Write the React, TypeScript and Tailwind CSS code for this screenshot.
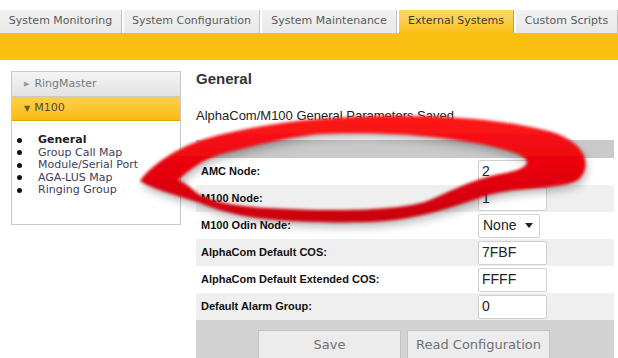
const tabs = [
  { label: 'System Monitoring', width: 'w-[122px]' },
  { label: 'System Configuration', width: 'w-[136px]' },
  { label: 'System Maintenance', width: 'w-[135px]' },
  { label: 'External Systems', width: 'w-[115px]', active: true },
  { label: 'Custom Scripts', width: 'w-[102px]' },
]

const menuItems = ['General', 'Group Call Map', 'Module/Serial Port', 'AGA-LUS Map', 'Ringing Group']

type Row = { label: string; value: string; select?: boolean }

const rows: Row[] = [
  { label: 'AMC Node:', value: '2' },
  { label: 'M100 Node:', value: '1' },
  { label: 'M100 Odin Node:', value: 'None', select: true },
  { label: 'AlphaCom Default COS:', value: '7FBF' },
  { label: 'AlphaCom Default Extended COS:', value: 'FFFF' },
  { label: 'Default Alarm Group:', value: '0' },
]

const verdana = "font-['DejaVu_Sans',Verdana,sans-serif]"
const arial = "font-['Liberation_Sans',Arial,sans-serif]"

function Tabs() {
  return (
    <div className="flex gap-[2px] pt-[10px]">
      {tabs.map((tab) => (
        <div
          key={tab.label}
          className={`${tab.width} flex h-[23px] shrink-0 items-center justify-center border-r text-[11px] ${verdana} ${
            tab.active
              ? 'border-[#d9a400] bg-gradient-to-b from-[#fdd863] to-[#fcc012] text-[#3a3a3a]'
              : 'border-[#c2c2c2] bg-gradient-to-b from-[#f2f2f2] to-[#e8e8e8] text-[#5a5a5a]'
          }`}
        >
          {tab.label}
        </div>
      ))}
    </div>
  )
}

function Sidebar() {
  return (
    <aside className="ml-[11px] mt-[11px] h-[154px] w-[170px] shrink-0 border border-[#c8c8c8] bg-white">
      <div className={`flex h-[25px] items-center gap-[5px] border-b border-[#c8c8c8] bg-gradient-to-b from-[#f4f4f4] to-[#e3e3e3] pl-[12px] text-[11px] text-[#7a7a7a] ${verdana}`}>
        <span className="text-[7px] text-[#999]">▶</span>
        RingMaster
      </div>
      <div className={`flex h-[24px] items-center gap-[4px] border-b border-[#e0a800] bg-gradient-to-b from-[#fdd048] to-[#fbbb05] pl-[12px] text-[11px] text-[#4a4a4a] ${verdana}`}>
        <span className="text-[8px] text-[#6a5a20]">▼</span>
        M100
      </div>
      <ul className={`mt-[13px] text-[11px] leading-[12.5px] text-[#3d3d5c] ${verdana}`}>
        {menuItems.map((item, i) => (
          <li key={item} className="flex items-center">
            <span className="ml-[5px] mr-[16px] h-[5px] w-[5px] rounded-full bg-[#111]" />
            <span className={i === 0 ? 'font-bold text-[#222]' : ''}>{item}</span>
          </li>
        ))}
      </ul>
    </aside>
  )
}

function Field({ row }: { row: Row }) {
  if (row.select) {
    return (
      <div className={`flex h-[24px] w-[62px] items-center justify-between rounded-[2px] border border-[#cfcfcf] bg-white pl-[4px] pr-[6px] text-[14px] text-[#222] ${arial}`}>
        {row.value}
        <span className="h-0 w-0 border-x-[4px] border-t-[5px] border-x-transparent border-t-[#222]" />
      </div>
    )
  }
  return (
    <div className={`flex h-[24px] w-[69px] items-center rounded-[2px] border border-[#cfcfcf] bg-white px-[3px] text-[14px] text-[#222] ${arial}`}>
      {row.value}
    </div>
  )
}

function ParamsTable() {
  return (
    <div className="mt-[16px] w-[418px]">
      <div className="h-[18px] bg-[#c9c9c9]" />
      {rows.map((row, i) => (
        <div
          key={row.label}
          className={`flex h-[27px] items-center ${i % 2 === 0 ? 'bg-white' : 'bg-[#efefef]'}`}
        >
          <span className={`w-[282px] pl-[5px] text-[11px] font-bold text-[#111] ${arial}`}>{row.label}</span>
          <Field row={row} />
        </div>
      ))}
      <div className="flex h-[40px] gap-[6px] bg-[#d3d3d3] pl-[62px] pt-[10px]">
        {['Save', 'Read Configuration'].map((b) => (
          <button
            key={b}
            type="button"
            className={`h-[30px] w-[143px] border border-[#c4c4c4] bg-[#ececec] text-[13px] text-[#707070] ${verdana}`}
          >
            {b}
          </button>
        ))}
      </div>
    </div>
  )
}

// hand-drawn red marker ring around the first two rows
const ring =
  'M320 119 C400 112 490 116 548 131 C585 141 594 165 578 180 C560 190 520 186 485 196 C455 206 420 220 370 222 C330 223 310 222 290 221 C250 219 220 212 200 203 C175 195 150 188 140 181 C150 166 178 147 205 139 C240 129 280 122 320 119 Z ' +
  'M320 134 C410 130 490 142 520 155 C535 163 525 170 500 174 C470 180 450 192 425 202 C390 212 320 211 265 208 C235 206 212 202 198 194 C190 187 184 182 178 180 C190 170 200 160 225 153 C260 144 290 137 320 134 Z'

function RedCircle() {
  return (
    <svg className="pointer-events-none absolute inset-0" width="618" height="358" viewBox="0 0 618 358">
      <defs>
        <filter id="soft" x="-10%" y="-30%" width="120%" height="160%">
          <feGaussianBlur stdDeviation="1.6" />
        </filter>
        <filter id="shade" x="-10%" y="-30%" width="120%" height="160%">
          <feGaussianBlur stdDeviation="4" />
        </filter>
        <linearGradient id="ink" x1="0" y1="0" x2="0" y2="1">
          <stop offset="0" stopColor="#ff1a1a" />
          <stop offset="0.5" stopColor="#e8000c" />
          <stop offset="1" stopColor="#c8000a" />
        </linearGradient>
      </defs>
      <path d={ring} fill="#000" fillRule="evenodd" opacity="0.25" transform="translate(2 5)" filter="url(#shade)" />
      <path d={ring} fill="url(#ink)" fillRule="evenodd" filter="url(#soft)" />
    </svg>
  )
}

export default function App() {
  return (
    <div className="relative h-[358px] w-[618px] overflow-hidden bg-white">
      <Tabs />
      <div className="h-[27px] bg-[#fcc012]" />
      <div className="flex">
        <Sidebar />
        <main className="ml-[15px] pt-[9px]">
          <h1 className={`text-[15px] font-bold leading-[20px] text-[#333] ${arial}`}>General</h1>
          <p className={`mt-[19px] text-[13px] leading-[16px] text-[#222] ${arial}`}>
            AlphaCom/M100 General Parameters Saved
          </p>
          <ParamsTable />
        </main>
      </div>
      <RedCircle />
    </div>
  )
}
